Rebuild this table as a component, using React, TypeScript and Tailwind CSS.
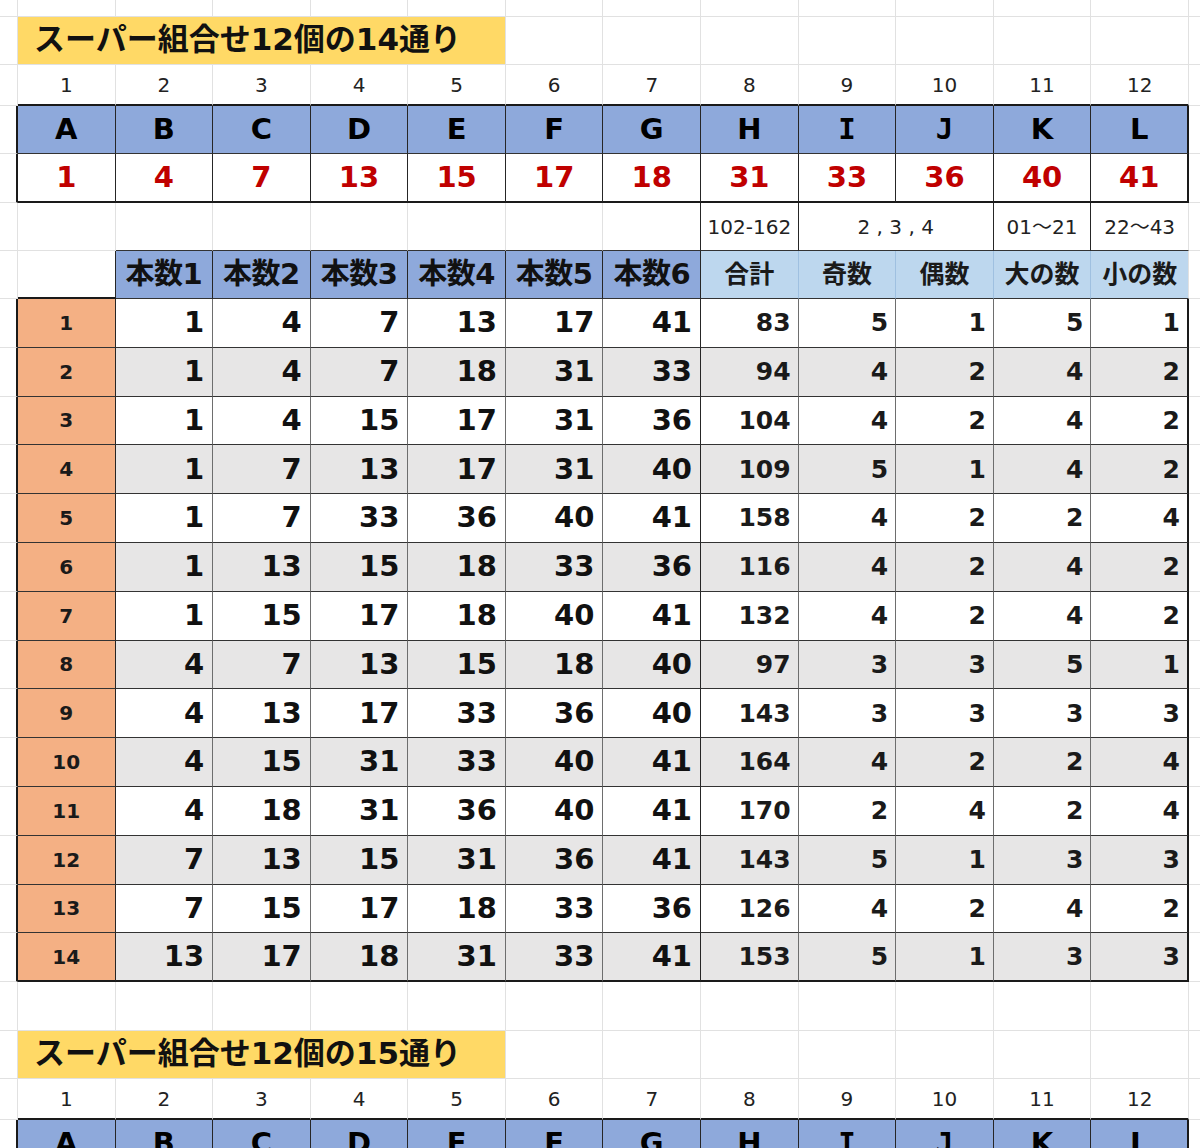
import type { ReactNode } from 'react';

// border presets, right side / bottom side
const R = {
  f: 'border-r border-r-[#e1e1e1]',
  d: 'border-r border-r-[#262626]',
  D: 'border-r-2 border-r-[#1a1a1a]',
  g: 'border-r border-r-[#6e6e6e]',
  l: 'border-r border-r-[#9fc0e0]',
  n: '',
};
const B = {
  f: 'border-b border-b-[#e1e1e1]',
  d: 'border-b border-b-[#333333]',
  D: 'border-b-2 border-b-[#1a1a1a]',
  n: '',
};

type Side = keyof typeof R;
type BSide = keyof typeof B;
type Cell = { c?: ReactNode; span?: 1 | 2 | 5; r?: Side; b?: BSide; cls?: string };

const SPAN = { 1: '', 2: 'col-span-2', 5: 'col-span-5' };

const font = "font-['DejaVu_Sans','Noto_Sans_CJK_JP',sans-serif]";

const Row = ({ h, cells }: { h: string; cells: Cell[] }) => (
  <div className={`grid grid-cols-[18px_repeat(12,97.583px)_1fr] ${h}`}>
    {cells.map((cell, i) => (
      <div
        key={i}
        className={`flex items-center overflow-hidden whitespace-nowrap ${SPAN[cell.span ?? 1]} ${R[cell.r ?? 'f']} ${B[cell.b ?? 'f']} ${cell.cls ?? ''}`}
      >
        {cell.c}
      </div>
    ))}
  </div>
);

const blank = (n: number, extra: Partial<Cell> = {}): Cell[] => Array.from({ length: n }, () => ({ ...extra }));
const edge = (b: BSide = 'f'): Cell => ({ r: 'n', b });

const LETTERS = ['A', 'B', 'C', 'D', 'E', 'F', 'G', 'H', 'I', 'J', 'K', 'L'];
const PICKS = [1, 4, 7, 13, 15, 17, 18, 31, 33, 36, 40, 41];

const DATA = [
  [1, 4, 7, 13, 17, 41, 83, 5, 1, 5, 1],
  [1, 4, 7, 18, 31, 33, 94, 4, 2, 4, 2],
  [1, 4, 15, 17, 31, 36, 104, 4, 2, 4, 2],
  [1, 7, 13, 17, 31, 40, 109, 5, 1, 4, 2],
  [1, 7, 33, 36, 40, 41, 158, 4, 2, 2, 4],
  [1, 13, 15, 18, 33, 36, 116, 4, 2, 4, 2],
  [1, 15, 17, 18, 40, 41, 132, 4, 2, 4, 2],
  [4, 7, 13, 15, 18, 40, 97, 3, 3, 5, 1],
  [4, 13, 17, 33, 36, 40, 143, 3, 3, 3, 3],
  [4, 15, 31, 33, 40, 41, 164, 4, 2, 2, 4],
  [4, 18, 31, 36, 40, 41, 170, 2, 4, 2, 4],
  [7, 13, 15, 31, 36, 41, 143, 5, 1, 3, 3],
  [7, 15, 17, 18, 33, 36, 126, 4, 2, 4, 2],
  [13, 17, 18, 31, 33, 41, 153, 5, 1, 3, 3],
];

const TitleRow = ({ label }: { label: string }) => (
  <Row
    h="h-[48px]"
    cells={[
      {},
      {
        span: 5,
        c: label,
        cls: 'bg-[#ffd966] pl-[16px] pb-[2px] text-[31px] font-bold text-[#111]',
      },
      ...blank(7),
      edge(),
    ]}
  />
);

const NumberRow = () => (
  <Row
    h="h-[41px]"
    cells={[
      {},
      ...PICKS.map((_, i) => ({
        c: i + 1,
        b: 'D' as BSide,
        cls: 'justify-center text-[20px] text-[#222] pt-[1px]',
      })),
      edge(),
    ]}
  />
);

// I and J in the sheet font carry bars, the mono face has them too
const letter = (l: string) =>
  l === 'I' || l === 'J' ? <span className="font-['DejaVu_Sans_Mono',monospace]">{l}</span> : l;

const LetterRow = () => (
  <Row
    h="h-[48px]"
    cells={[
      { r: 'D' },
      ...LETTERS.map((l, i) => ({
        c: letter(l),
        r: (i === 11 ? 'D' : 'd') as Side,
        b: 'd' as BSide,
        cls: 'justify-center bg-[#8ea9db] text-[29px] font-bold text-black',
      })),
      edge(),
    ]}
  />
);

export default function App() {
  return (
    <div className={`h-[1148px] w-[1200px] overflow-hidden bg-white ${font}`}>
      <Row h="h-[17px]" cells={[...blank(13), edge()]} />
      <TitleRow label="スーパー組合せ12個の14通り" />
      <NumberRow />
      <LetterRow />

      {/* picked numbers */}
      <Row
        h="h-[49px]"
        cells={[
          { r: 'D' },
          ...PICKS.map((p, i) => ({
            c: p,
            r: (i === 11 ? 'D' : 'd') as Side,
            b: 'D' as BSide,
            cls: 'justify-center bg-white text-[29px] font-bold text-[#c00000]',
          })),
          edge(),
        ]}
      />

      {/* ranges */}
      <Row
        h="h-[48px]"
        cells={[
          {},
          {},
          ...blank(5, { b: 'd' }),
          { r: 'd', b: 'd' },
          { c: '102-162', r: 'd', b: 'd', cls: 'justify-center text-[20px] text-[#222]' },
          { c: '2 , 3 , 4', span: 2, r: 'd', b: 'd', cls: 'justify-center text-[20px] text-[#222]' },
          { c: '01～21', r: 'd', b: 'd', cls: 'justify-center text-[20px] text-[#222]' },
          { c: '22～43', r: 'f', b: 'd', cls: 'justify-center text-[20px] text-[#222]' },
          edge(),
        ]}
      />

      {/* column labels */}
      <Row
        h="h-[48px]"
        cells={[
          {},
          { r: 'd', b: 'D' },
          ...[1, 2, 3, 4, 5, 6].map((n) => ({
            c: `本数${n}`,
            r: 'd' as Side,
            b: 'd' as BSide,
            cls: 'justify-center bg-[#8ea9db] text-[29px] font-bold text-[#111] tracking-[-0.5px]',
          })),
          ...['合計', '奇数', '偶数', '大の数', '小の数'].map((t, i) => ({
            c: t,
            r: (i === 4 ? 'f' : 'l') as Side,
            b: 'd' as BSide,
            cls: 'justify-center bg-[#bdd7ee] text-[25px] font-bold text-[#1a1a1a]',
          })),
          edge(),
        ]}
      />

      {/* combinations */}
      {DATA.map((row, ri) => {
        const last = ri === DATA.length - 1;
        const bg = ri % 2 === 1 ? 'bg-[#e7e6e6]' : 'bg-white';
        const bb: BSide = last ? 'D' : 'd';
        return (
          <Row
            key={ri}
            h="h-[48.8px]"
            cells={[
              { r: 'D' },
              {
                c: ri + 1,
                r: 'd',
                b: bb,
                cls: 'justify-center bg-[#f4b084] text-[20px] font-bold text-[#1a1a1a]',
              },
              ...row.map((v, ci) => ({
                c: v,
                r: (ci === 10 ? 'D' : ci === 5 ? 'd' : 'g') as Side,
                b: bb,
                cls:
                  ci < 6
                    ? `justify-end pr-[8px] text-[29px] font-bold text-[#111] ${bg}`
                    : `justify-end pr-[7px] text-[25px] font-bold text-[#1a1a1a] ${bg}`,
              })),
              edge(),
            ]}
          />
        );
      })}

      <Row h="h-[49px]" cells={[...blank(13), edge()]} />
      <TitleRow label="スーパー組合せ12個の15通り" />
      <NumberRow />
      <LetterRow />
    </div>
  );
}
